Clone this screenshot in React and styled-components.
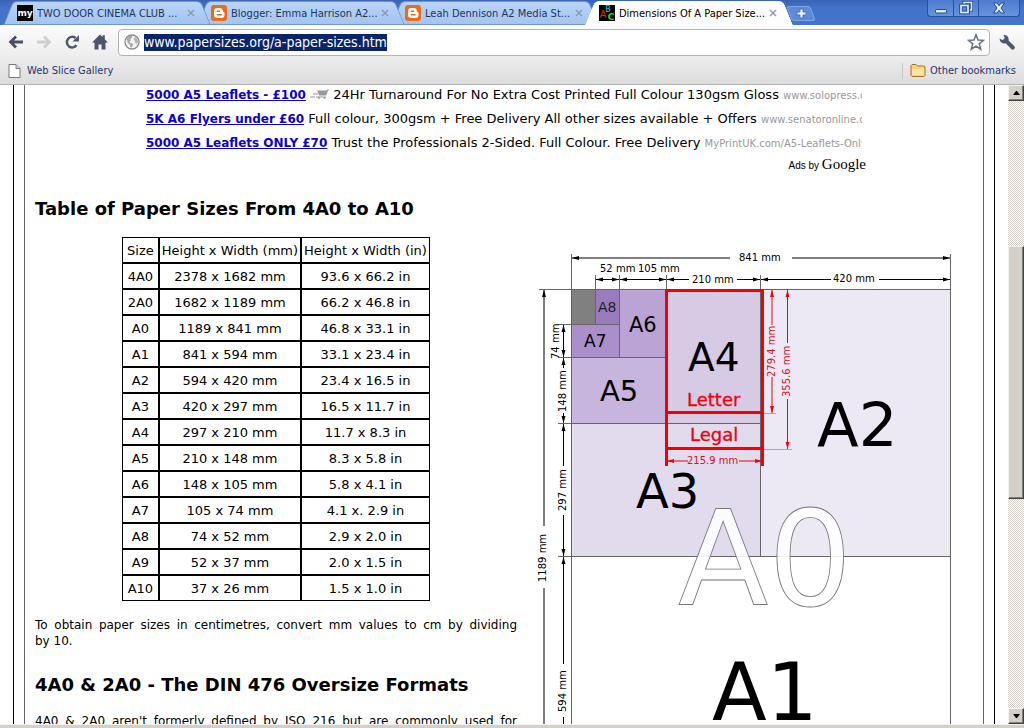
import React from "react";
import styled, { createGlobalStyle, css } from "styled-components";

const tabs = [
    { title: "TWO DOOR CINEMA CLUB ...", icon: "my" },
    { title: "Blogger: Emma Harrison A2...", icon: "blogger" },
    { title: "Leah Dennison A2 Media St...", icon: "blogger" },
    { title: "Dimensions Of A Paper Size...", icon: "abc", active: true },
];

const ads = [
    {
        title: "5000 A5 Leaflets - £100",
        cart: true,
        text: "24Hr Turnaround For No Extra Cost Printed Full Colour 130gsm Gloss",
        site: "www.solopress.com",
    },
    {
        title: "5K A6 Flyers under £60",
        text: "Full colour, 300gsm + Free Delivery All other sizes available + Offers",
        site: "www.senatoronline.co.uk",
    },
    {
        title: "5000 A5 Leaflets ONLY £70",
        text: "Trust the Professionals 2-Sided. Full Colour. Free Delivery",
        site: "MyPrintUK.com/A5-Leaflets-Only",
    },
];

const sizes = [
    ["4A0", "2378 x 1682 mm", "93.6 x 66.2 in"],
    ["2A0", "1682 x 1189 mm", "66.2 x 46.8 in"],
    ["A0", "1189 x 841 mm", "46.8 x 33.1 in"],
    ["A1", "841 x 594 mm", "33.1 x 23.4 in"],
    ["A2", "594 x 420 mm", "23.4 x 16.5 in"],
    ["A3", "420 x 297 mm", "16.5 x 11.7 in"],
    ["A4", "297 x 210 mm", "11.7 x 8.3 in"],
    ["A5", "210 x 148 mm", "8.3 x 5.8 in"],
    ["A6", "148 x 105 mm", "5.8 x 4.1 in"],
    ["A7", "105 x 74 mm", "4.1 x. 2.9 in"],
    ["A8", "74 x 52 mm", "2.9 x 2.0 in"],
    ["A9", "52 x 37 mm", "2.0 x 1.5 in"],
    ["A10", "37 x 26 mm", "1.5 x 1.0 in"],
];

const App = () => (
    <Browser>
        <GlobalStyle />
        <TabStrip />
        <Toolbar />
        <BookmarksBar />
        <Viewport>
            <Page>
                <PageFrame>
                    <PageInner>
                        <AdBlock />
                        <Heading>Table of Paper Sizes From 4A0 to A10</Heading>
                        <Columns>
                            <Article>
                                <SizeTable />
                                <Paragraph>
                                    To obtain paper sizes in centimetres,
                                    convert mm values to cm by dividing
                                    by&nbsp;10.
                                </Paragraph>
                                <Heading>
                                    4A0 &amp; 2A0 - The DIN 476 Oversize Formats
                                </Heading>
                                <Paragraph>
                                    4A0 &amp; 2A0 aren't formerly defined by ISO
                                    216 but are commonly used for oversize
                                    sheets of paper.
                                </Paragraph>
                            </Article>
                            <PaperDiagram />
                        </Columns>
                    </PageInner>
                </PageFrame>
            </Page>
            <Scrollbar />
        </Viewport>
        <WindowEdge />
    </Browser>
);

export default App;

const TabStrip = () => (
    <StyledTabStrip>
        <TabList>
            {tabs.map(({ title, icon, active }, i) => (
                <Tab key={title} $active={active} $order={active ? 9 : 4 - i}>
                    <Favicon name={icon} />
                    <TabTitle type="button">{title}</TabTitle>
                    <TabClose type="button" aria-label="Close tab">
                        <svg width="8" height="8" viewBox="0 0 8 8">
                            <path
                                d="M1 1l6 6M7 1L1 7"
                                stroke="currentColor"
                                strokeWidth="1.5"
                            />
                        </svg>
                    </TabClose>
                </Tab>
            ))}
            <NewTab type="button" aria-label="New tab">
                <svg width="11" height="11" viewBox="0 0 11 11">
                    <path
                        d="M4 1h3v3h3v3H7v3H4V7H1V4h3z"
                        fill="#e8f0fc"
                        stroke="#3a62ae"
                        strokeWidth=".8"
                    />
                </svg>
            </NewTab>
        </TabList>
        <WindowControls>
            <WindowButton type="button" aria-label="Minimize">
                <svg width="12" height="12" viewBox="0 0 12 12">
                    <rect
                        x=".5"
                        y="7.5"
                        width="11"
                        height="3.5"
                        rx="1"
                        fill="#dfe8f6"
                        stroke="#234b91"
                    />
                </svg>
            </WindowButton>
            <WindowButton type="button" aria-label="Restore">
                <svg width="14" height="14" viewBox="0 0 14 14" fill="none">
                    <path
                        d="M5 4V1.500h7.500v7.500H10"
                        stroke="#234b91"
                        strokeWidth="3.200"
                    />
                    <path
                        d="M5 4V1.500h7.500v7.500H10"
                        stroke="#dfe8f6"
                        strokeWidth="1.500"
                    />
                    <rect
                        x="2"
                        y="4.500"
                        width="7"
                        height="7"
                        stroke="#234b91"
                        strokeWidth="3.600"
                    />
                    <rect
                        x="2"
                        y="4.500"
                        width="7"
                        height="7"
                        stroke="#dfe8f6"
                        strokeWidth="1.700"
                    />
                </svg>
            </WindowButton>
            <WindowButton type="button" aria-label="Close" $wide>
                <svg width="14" height="12" viewBox="0 0 14 12">
                    <path
                        d="M1.500 1h3.500l2 2.800L9 1h3.500L9 6l3.500 5H9L7 8.200 5 11H1.500L5 6z"
                        fill="#dfe8f6"
                        stroke="#234b91"
                    />
                </svg>
            </WindowButton>
        </WindowControls>
    </StyledTabStrip>
);

const Favicon = ({ name }) => {
    if (name === "my") {
        return (
            <FaviconSvg viewBox="0 0 16 16">
                <rect width="16" height="16" fill="#000" />
                <text x="8" y="11" fontSize="9" fontWeight="700" fill="#fff">
                    my
                </text>
            </FaviconSvg>
        );
    }
    if (name === "abc") {
        return (
            <FaviconSvg viewBox="0 0 16 16">
                <rect width="16" height="16" fill="#000" />
                <text x="4" y="13" fontSize="10" fill="#f01818">
                    A
                </text>
                <text x="9" y="7" fontSize="8" fill="#30c8d8">
                    B
                </text>
                <text x="12" y="15" fontSize="9" fontWeight="700" fill="#20e020">
                    C
                </text>
            </FaviconSvg>
        );
    }
    return (
        <FaviconSvg viewBox="0 0 16 16">
            <rect width="16" height="16" rx="3" fill="#f06a15" />
            <path
                d="M6.200 3h2.600A3 3 0 0 1 11.800 6c0 .8.300 1 .8 1 .6 0 .9.400.9 1v1.800A3.200 3.200 0 0 1 10.200 13H6.200A3.200 3.200 0 0 1 3 9.800V6.200A3.200 3.200 0 0 1 6.200 3z"
                fill="#fff"
            />
            <path
                d="M6.300 6.200h2.200M6.300 9.800h3.800"
                stroke="#f06a15"
                strokeWidth="1.500"
                strokeLinecap="round"
            />
        </FaviconSvg>
    );
};

const Toolbar = () => (
    <StyledToolbar>
        <ToolButton type="button" aria-label="Back">
            <svg width="16" height="16" viewBox="0 0 16 16" fill="none">
                <path
                    d="M8 2.500L2.500 8 8 13.500M3 8h12"
                    stroke="#465069"
                    strokeWidth="2.800"
                />
            </svg>
        </ToolButton>
        <ToolButton type="button" aria-label="Forward">
            <svg width="16" height="16" viewBox="0 0 16 16" fill="none">
                <path
                    d="M8 2.500L13.500 8 8 13.500M13 8H1"
                    stroke="#cfcfcf"
                    strokeWidth="2.800"
                />
            </svg>
        </ToolButton>
        <ToolButton type="button" aria-label="Reload">
            <svg width="16" height="16" viewBox="0 0 16 16">
                <path
                    d="M12.500 11.200A5.300 5.300 0 1 1 11.500 4"
                    fill="none"
                    stroke="#4f586d"
                    strokeWidth="2.500"
                />
                <path d="M15 1v6.500H8.500z" fill="#4f586d" />
            </svg>
        </ToolButton>
        <ToolButton type="button" aria-label="Home">
            <svg width="16" height="16" viewBox="0 0 16 16" fill="#4c556c">
                <path d="M8 .5l2.500 2.400V1.200h2.300v4L16 8.500H0z" />
                <path d="M2.500 8h11v7.500H9.600V10.500H6.500v5h-4z" />
            </svg>
        </ToolButton>
        <Omnibox>
            <svg width="16" height="16" viewBox="0 0 16 16">
                <circle
                    cx="8"
                    cy="8"
                    r="7"
                    fill="#f4f4f4"
                    stroke="#8a8a8a"
                    strokeWidth="1.300"
                />
                <path
                    d="M2.200 5C3.200 3 5 2 7.500 1.800l1 1.700-2 1.500.5 1.500-1.500 1.200.7 1.300 2.300.5.8 1.500-1.800 2.500-1-.2-.7-2.800-2-1.500-.4-2z"
                    fill="#ababab"
                />
                <path
                    d="M10.500 3l2.500 1.500 1.200 3-1.700 2.500-1.500-1.500-.3-2-1.200-1.500z"
                    fill="#b4b4b4"
                />
            </svg>
            <Address
                aria-label="Address"
                defaultValue="www.papersizes.org/a-paper-sizes.htm"
            />
            <StarButton type="button" aria-label="Bookmark this page">
                <svg width="18" height="18" viewBox="0 0 18 18">
                    <path
                        d="M9 1.800l2 5.200 5.500.3-4.300 3.500 1.500 5.400L9 13.100l-4.700 3.100 1.500-5.400L1.500 7.300 7 7z"
                        fill="#fff"
                        stroke="#67718a"
                        strokeWidth="1.500"
                    />
                </svg>
            </StarButton>
        </Omnibox>
        <ToolButton type="button" aria-label="Settings">
            <svg width="16" height="16" viewBox="0 0 16 16">
                <path
                    d="M4.500.8a4.600 4.600 0 0 1 5 5.600l5.700 5.700a2 2 0 0 1-2.900 2.900L6.700 9.300A4.600 4.600 0 0 1 .6 4.600l3 1.700 2.200-2.200z"
                    fill="#4c566d"
                />
            </svg>
        </ToolButton>
    </StyledToolbar>
);

const BookmarksBar = () => (
    <StyledBookmarksBar>
        <Bookmark href="#gallery">
            <svg width="13" height="14" viewBox="0 0 13 14">
                <path
                    d="M1 .5h7l4 4v9H1z"
                    fill="#fff"
                    stroke="#777"
                    strokeLinejoin="round"
                />
                <path d="M8 .5v4h4" fill="#ddd" stroke="#777" />
            </svg>
            Web Slice Gallery
        </Bookmark>
        <OtherBookmarks type="button">
            <svg width="16" height="13" viewBox="0 0 16 13">
                <path
                    d="M1 11.500v-10l1-1h4l1.500 1.500H14l1 1v8.500l-1 1H2z"
                    fill="#fbd27c"
                    stroke="#a7712c"
                />
                <path d="M2 5h9l1.500-1.500H14V11H2z" fill="#fde2a2" />
            </svg>
            Other bookmarks
        </OtherBookmarks>
    </StyledBookmarksBar>
);

const AdBlock = () => (
    <StyledAdBlock>
        {ads.map(({ title, cart, text, site }) => (
            <Ad key={title}>
                <AdLink href="#ad">{title}</AdLink>{" "}
                {cart ? (
                    <>
                        <svg width="19" height="10" viewBox="0 0 19 10">
                            <path
                                d="M7 1.500h9l1.500-1H19v1h-1l-1.700 5h-7zM3 4.500h5v1H3zM0 7.500h5v1H0zM6 7.500h10v1H6z"
                                fill="#999"
                            />
                            <circle cx="9" cy="9" r="1" fill="#999" />
                            <circle cx="14.500" cy="9" r="1" fill="#999" />
                        </svg>{" "}
                    </>
                ) : null}
                {text} <AdSite>{site}</AdSite>
            </Ad>
        ))}
        <AdsBy>
            Ads by <GoogleName>Google</GoogleName>
        </AdsBy>
    </StyledAdBlock>
);

const SizeTable = () => (
    <StyledTable>
        <thead>
            <tr>
                <th>Size</th>
                <th>Height x Width (mm)</th>
                <th>Height x Width (in)</th>
            </tr>
        </thead>
        <tbody>
            {sizes.map(([name, mm, inches]) => (
                <tr key={name}>
                    <td>{name}</td>
                    <td>{mm}</td>
                    <td>{inches}</td>
                </tr>
            ))}
        </tbody>
    </StyledTable>
);

// dimension line with an optional arrow head on either end
const Arrow = ({ x1, y1, x2, y2, start, end, color = "#000" }) => {
    const angle = (Math.atan2(y2 - y1, x2 - x1) * 180) / Math.PI;
    return (
        <g fill={color} stroke="none">
            <line x1={x1} y1={y1} x2={x2} y2={y2} stroke={color} />
            {start ? (
                <path
                    d="M0 0l7-2v4z"
                    transform={`translate(${x1} ${y1}) rotate(${angle})`}
                />
            ) : null}
            {end ? (
                <path
                    d="M0 0l-7-2v4z"
                    transform={`translate(${x2} ${y2}) rotate(${angle})`}
                />
            ) : null}
        </g>
    );
};

const VerticalText = ({ x, y, children, ...rest }) => (
    <text transform={`translate(${x} ${y}) rotate(-90)`} {...rest}>
        {children}
    </text>
);

const PaperDiagram = () => (
    <Diagram viewBox="0 0 443 520" role="img" aria-label="A paper sizes">
        <g stroke="none">
            <rect x="41.500" y="47.500" width="24" height="35" fill="#808080" />
            <rect x="65.500" y="47.500" width="23.500" height="34.500" fill="#9a7bbe" />
            <rect x="41.500" y="82" width="47.500" height="33.500" fill="#ab8fcb" />
            <rect x="89" y="47.500" width="47" height="68" fill="#bba3d5" />
            <rect x="41.500" y="115.500" width="94.500" height="66.500" fill="#c8b5dd" />
            <rect x="136" y="47.500" width="94.500" height="134.500" fill="#d6cae5" />
            <rect x="41.500" y="182" width="189" height="132.500" fill="#e1dbed" />
            <rect x="230.500" y="47.500" width="190" height="267" fill="#ece9f5" />
        </g>
        <g stroke="#666" fill="none">
            <path d="M9 47.500H420.500M28 314.500H420.500M28 181.500H230.500M28 115.500H136M28 82.500H89" />
            <path d="M41.500 12V520M420.500 12V520M65.500 33V82M89.500 33V115.500M136.500 33V182M230.500 33V314.500" />
        </g>

        <Arrow x1={42} y1={16} x2={200} y2={16} start />
        <Arrow x1={262} y1={16} x2={420} y2={16} end />
        <Arrow x1={66} y1={37.5} x2={89} y2={37.5} start end />
        <Arrow x1={90} y1={37.5} x2={136} y2={37.5} start end />
        <Arrow x1={137} y1={37.5} x2={159} y2={37.5} start />
        <Arrow x1={207} y1={37.5} x2={230} y2={37.5} end />
        <Arrow x1={231} y1={37.5} x2={301} y2={37.5} start />
        <Arrow x1={349} y1={37.5} x2={420} y2={37.5} end />

        <Arrow x1={14} y1={48} x2={14} y2={284} start />
        <Arrow x1={14} y1={346} x2={14} y2={520} />
        <Arrow x1={33.5} y1={83} x2={33.5} y2={115} start end />
        <Arrow x1={33.5} y1={116} x2={33.5} y2={126} start />
        <Arrow x1={33.5} y1={171} x2={33.5} y2={181} end />
        <Arrow x1={33.5} y1={182} x2={33.5} y2={224} start />
        <Arrow x1={33.5} y1={273} x2={33.5} y2={314} end />
        <Arrow x1={33.5} y1={315} x2={33.5} y2={422} start />
        <Arrow x1={33.5} y1={475} x2={33.5} y2={520} />

        <g fontSize="10">
            <text x="209" y="19">841 mm</text>
            <text x="70" y="30">52 mm</text>
            <text x="108" y="30">105 mm</text>
            <text x="162" y="41">210 mm</text>
            <text x="303" y="40">420 mm</text>
            <VerticalText x={16} y={340}>1189 mm</VerticalText>
            <VerticalText x={29} y={117}>74 mm</VerticalText>
            <VerticalText x={36} y={170}>148 mm</VerticalText>
            <VerticalText x={36} y={269}>297 mm</VerticalText>
            <VerticalText x={36} y={470}>594 mm</VerticalText>
        </g>

        <text x="68" y="70" fontSize="14" fill="#222">A8</text>
        <text x="54" y="105" fontSize="17">A7</text>
        <text x="99" y="90" fontSize="21">A6</text>
        <text x="70" y="159" fontSize="29">A5</text>
        <text x="158" y="129" fontSize="39">A4</text>
        <text x="106" y="266" fontSize="48">A3</text>
        <text x="287" y="204" fontSize="61">A2</text>
        <text x="182" y="478" fontSize="80">A1</text>
        <text
            x="148"
            y="363"
            fontSize="132"
            fill="#fff"
            fillOpacity=".87"
            stroke="#777"
            strokeWidth=".8"
        >
            A0
        </text>

        <g stroke="#f20008" strokeWidth="3" fill="none">
            <path d="M136.500 47V224M232.500 47V224" />
            <path d="M135 48.500H234M135 170.500H234M135 206.500H234" />
        </g>
        <path
            d="M234 171.500h12M234 207.500h28"
            stroke="#f58a8a"
            fill="none"
        />
        <Arrow x1={137} y1={219} x2={158} y2={219} start color="#f20008" />
        <Arrow x1={209} y1={219} x2={232} y2={219} end color="#f20008" />
        <Arrow x1={242} y1={48} x2={242} y2={83} start color="#f20008" />
        <Arrow x1={242} y1={135} x2={242} y2={171} end color="#f20008" />
        <Arrow x1={257.5} y1={48} x2={257.5} y2={101} start color="#f20008" />
        <Arrow x1={257.5} y1={157} x2={257.5} y2={207} end color="#f20008" />
        <g fill="#e0101c" fontSize="10">
            <text x="157" y="222">215.9 mm</text>
            <VerticalText x={245} y={135}>279.4 mm</VerticalText>
            <VerticalText x={260} y={155}>355.6 mm</VerticalText>
        </g>
        <g fill="#f20008" stroke="#f20008" strokeWidth=".3" fontSize="18">
            <text x="157" y="164">Letter</text>
            <text x="160" y="199">Legal</text>
        </g>
    </Diagram>
);

const Scrollbar = () => (
    <StyledScrollbar>
        <ScrollButton type="button" aria-label="Scroll up">
            <svg width="7" height="4" viewBox="0 0 7 4">
                <path d="M3 0h1l3 4H0z" />
            </svg>
        </ScrollButton>
        <ScrollGap $grow={145} />
        <ScrollThumb />
        <ScrollGap $grow={210} />
        <ScrollButton type="button" aria-label="Scroll down">
            <svg width="7" height="4" viewBox="0 0 7 4">
                <path d="M0 0h7L4 4H3z" />
            </svg>
        </ScrollButton>
    </StyledScrollbar>
);

const GlobalStyle = createGlobalStyle`
    body {
        margin: 0;
        background: #fff;
        color: #000;
        font-family: Verdana, "DejaVu Sans", sans-serif;
        font-size: 13px;
    }

    * {
        box-sizing: border-box;
    }

    button {
        font: inherit;
        color: inherit;
        background: none;
        border: 0;
        padding: 0;
    }

    svg {
        flex: none;
    }
`;

const uiFont = css`
    font-family: Tahoma, "DejaVu Sans Condensed", "DejaVu Sans", sans-serif;
    font-size: 11px;
`;

const Browser = styled.div`
    height: 100vh;
    display: flex;
    flex-direction: column;
    overflow: hidden;
`;

const StyledTabStrip = styled.header`
    ${uiFont}
    flex: none;
    display: flex;
    justify-content: space-between;
    align-items: flex-start;
    height: 25px;
    padding: 0 4px 0 8px;
    background: linear-gradient(#3a62b4, #4472c8 30%, #4374cb);
    overflow: hidden;
`;

const TabList = styled.nav`
    display: flex;
    align-items: center;
    padding-top: 1px;
    min-width: 0;
`;

const Tab = styled.div`
    position: relative;
    z-index: ${({ $order }) => $order};
    isolation: isolate;
    display: flex;
    align-items: center;
    gap: 4px;
    width: 198px;
    height: 24px;
    margin-right: -4px;
    padding: 0 11px 0 9px;
    color: ${({ $active }) => ($active ? "#000" : "#1d3656")};

    &::before,
    &::after {
        content: "";
        position: absolute;
        z-index: -1;
        top: 0;
        bottom: 0;
        background: ${({ $active }) =>
            $active ? "#fdfdfd" : "linear-gradient(#b9d4f8, #a3c4f2)"};
        border: 1px solid ${({ $active }) => ($active ? "#fdfdfd" : "#6f96d2")};
    }

    &::before {
        left: 0;
        right: 30%;
        border-right: 0;
        border-top-left-radius: 5px;
        transform: skewX(-22deg);
    }

    &::after {
        left: 30%;
        right: 0;
        border-left: 0;
        border-top-right-radius: 5px;
        transform: skewX(22deg);
    }
`;

const FaviconSvg = styled.svg`
    width: 16px;
    height: 16px;
    font-family: "DejaVu Sans", sans-serif;
    text-anchor: middle;
`;

const TabTitle = styled.button`
    flex: 1;
    min-width: 0;
    text-align: left;
    white-space: nowrap;
    overflow: hidden;
`;

const TabClose = styled.button`
    display: flex;
    color: #8c9bb2;
`;

const NewTab = styled.button`
    position: relative;
    display: flex;
    align-items: center;
    justify-content: center;
    width: 24px;
    height: 15px;
    margin-left: 5px;

    &::before {
        content: "";
        position: absolute;
        inset: 0;
        background: #5c8ad8;
        border: 1px solid #7ea5e4;
        border-radius: 3px;
        transform: skewX(20deg);
    }

    & svg {
        position: relative;
    }
`;

const WindowControls = styled.div`
    display: flex;
    height: 17px;
    border: 1px solid #24509c;
    border-top: 0;
    border-radius: 0 0 4px 4px;
    background: linear-gradient(#4d7bd0, #6893dd);
`;

const WindowButton = styled.button`
    display: flex;
    align-items: center;
    justify-content: center;
    width: ${({ $wide }) => ($wide ? 41 : 25)}px;

    & + & {
        border-left: 1px solid #24509c;
    }
`;

const StyledToolbar = styled.div`
    flex: none;
    display: flex;
    align-items: center;
    gap: 12px;
    height: 34px;
    padding: 0 9px 0 8px;
    background: linear-gradient(#fcfcfc, #ececec);
`;

const ToolButton = styled.button`
    display: flex;
`;

const Omnibox = styled.div`
    flex: 1;
    display: flex;
    align-items: center;
    height: 27px;
    margin: 0 -3px 0 -2px;
    padding: 0 4px 0 5px;
    background: #fff;
    border: 1px solid #b4b4b4;
    border-radius: 4px;
`;

const Address = styled.input`
    ${uiFont}
    field-sizing: content;
    height: 17px;
    margin: 0 auto 0 4px;
    padding: 0;
    border: 0;
    outline: 0;
    background: #0a246a;
    color: #fff;
    font-size: 14px;
`;

const StarButton = styled.button`
    display: flex;
`;

const StyledBookmarksBar = styled.nav`
    ${uiFont}
    flex: none;
    display: flex;
    justify-content: space-between;
    align-items: center;
    height: 26px;
    padding: 0 8px 2px;
    border-bottom: 1px solid #b2b2b2;
    background: linear-gradient(#ececec, #dcdcdc);
    color: #1f356f;
`;

const Bookmark = styled.a`
    display: flex;
    align-items: center;
    gap: 6px;
    color: inherit;
    text-decoration: none;
`;

const OtherBookmarks = styled.button`
    display: flex;
    align-items: center;
    gap: 4px;
    height: 16px;
    padding-left: 7px;
    border-left: 1px solid #c8c8c8;
`;

const Viewport = styled.div`
    flex: 1;
    min-height: 0;
    display: flex;
    overflow: hidden;
`;

const Page = styled.main`
    flex: 1;
    min-width: 0;
    padding: 0 13px;
`;

const PageFrame = styled.div`
    border: solid #000;
    border-width: 0 1px;
    padding: 0 10px;
`;

const PageInner = styled.div`
    border: solid #666;
    border-width: 0 1px;
    padding: 0 10px;
`;

const StyledAdBlock = styled.section`
    max-width: 724px;
    margin: 0 auto;
`;

const Ad = styled.p`
    margin: 0 4px 4px;
    line-height: 20px;
    white-space: nowrap;
    overflow: hidden;
`;

const AdLink = styled.a`
    color: #0b00d8;
    font-size: 12px;
    font-weight: 700;
    line-height: 1;
`;

const AdSite = styled.span`
    color: #999;
    font-size: 10px;
    line-height: 1;
`;

const AdsBy = styled.p`
    margin: 0;
    text-align: right;
    line-height: 14px;
    font-family: "Liberation Sans", Arial, sans-serif;
    font-size: 10px;
`;

const GoogleName = styled.span`
    font-family: "Liberation Serif", serif;
    font-size: 15px;
    line-height: 1;
`;

const Heading = styled.h2`
    margin: 24px 0 16px;
    line-height: 24px;
    font-size: 18px;
    font-weight: 700;
`;

const Columns = styled.div`
    display: grid;
    grid-template-columns: minmax(0, 1fr) 443px;
    gap: 13px;
    align-items: start;
`;

const Article = styled.article`
    min-width: 0;
`;

const StyledTable = styled.table`
    margin: 0 auto;
    border-spacing: 0;
    text-align: center;

    & th,
    & td {
        height: 26px;
        padding: 0 2px;
        border: 1px solid #000;
        font-weight: 400;
    }

    & th:first-child {
        padding: 0 4px;
    }
`;

const Paragraph = styled.p`
    margin: 16px 0;
    line-height: 16px;
    font-size: 12px;
    text-align: justify;
`;

const Diagram = styled.svg`
    width: 100%;
    margin-top: 5px;
    font-family: "DejaVu Sans", sans-serif;
`;

const StyledScrollbar = styled.div`
    flex: none;
    display: flex;
    flex-direction: column;
    width: 16px;
    background: repeating-conic-gradient(#d4d0c8 0 25%, #fff 0 50%) 0 0 / 2px 2px;
`;

const raised = css`
    background: #d4d0c8;
    border: 1px solid;
    border-color: #f4f2ee #404040 #404040 #f4f2ee;
    box-shadow: inset -1px -1px #808080;
`;

const ScrollButton = styled.button`
    ${raised}
    flex: none;
    display: flex;
    align-items: center;
    justify-content: center;
    height: 16px;
`;

const ScrollGap = styled.div`
    flex: ${({ $grow }) => $grow} 0 0;
`;

const ScrollThumb = styled.div`
    ${raised}
    flex: 252 0 0;
`;

const WindowEdge = styled.footer`
    flex: none;
    height: 4px;
    background: #d4d0c8;
    border-top: 1px solid #f4f2ee;
`;
